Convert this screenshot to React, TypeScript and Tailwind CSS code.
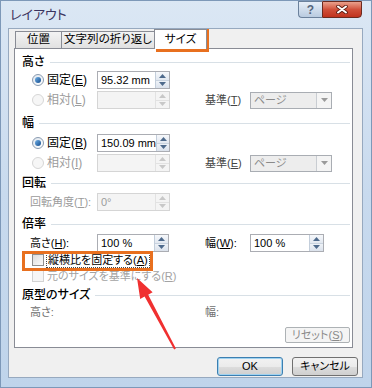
import React from "react";

const F = "font-['Liberation_Sans','Noto_Sans_CJK_JP',sans-serif] [font-feature-settings:'palt']";

function U({ children }: { children: React.ReactNode }) {
  return <span className="underline underline-offset-[1px]">{children}</span>;
}

function Spin({ disabled }: { disabled?: boolean }) {
  const c = disabled ? "#c8c8c8" : "#4e6a8c";
  return (
    <div className={`flex flex-col w-[14px] h-full border-l ${disabled ? "border-[#e2e2e2]" : "border-[#c3cedb]"}`}>
      <div className={`flex-1 flex items-center justify-center border-b ${disabled ? "bg-[#f4f4f4] border-[#e2e2e2]" : "bg-gradient-to-b from-[#f6f8fb] to-[#e2e8f0] border-[#c9d3df]"}`}>
        <svg width="7" height="4">
          <path d="M0 4 L3.5 0 L7 4Z" fill={c} />
        </svg>
      </div>
      <div className={`flex-1 flex items-center justify-center ${disabled ? "bg-[#f4f4f4]" : "bg-gradient-to-b from-[#eef2f7] to-[#dbe2ec]"}`}>
        <svg width="7" height="4">
          <path d="M0 0 L3.5 4 L7 0Z" fill={c} />
        </svg>
      </div>
    </div>
  );
}

function NumInput({ value, disabled, w }: { value?: string; disabled?: boolean; w: string }) {
  return (
    <div className={`flex h-[18px] ${w} border ${disabled ? "border-[#d5d5d5] bg-[#f4f4f4]" : "border-[#abadb3] bg-white"}`}>
      <div className={`flex-1 flex items-center pl-[3px] whitespace-nowrap ${disabled ? "text-[#9b9b9b]" : "text-black"}`}>
        {value}
      </div>
      <Spin disabled={disabled} />
    </div>
  );
}

function Select() {
  return (
    <div className="flex h-[17px] w-[82px] border border-[#a9adb3] bg-[#ededed]">
      <div className="flex-1 flex items-center pl-[3px] text-[#8a8a8a]">ページ</div>
      <div className="w-[15px] flex items-center justify-center border-l border-[#c9cdd2] bg-[#f4f4f4]">
        <svg width="7" height="4">
          <path d="M0 0 L3.5 4 L7 0Z" fill="#9a9a9a" />
        </svg>
      </div>
    </div>
  );
}

function Radio({ checked, disabled }: { checked?: boolean; disabled?: boolean }) {
  return (
    <span
      className={`flex items-center justify-center w-[12px] h-[12px] rounded-full border ${
        disabled ? "border-[#d6d6d6] bg-[#f6f6f6]" : "border-[#8a9bb0] bg-gradient-to-br from-[#dfe6ee] to-white"
      }`}
    >
      {checked && <span className="w-[6px] h-[6px] rounded-full bg-gradient-to-br from-[#6fb0e6] to-[#124c8e]" />}
    </span>
  );
}

function Check({ disabled }: { disabled?: boolean }) {
  return (
    <span
      className={`w-[12px] h-[12px] border ${
        disabled ? "border-[#d3d3d3] bg-[#f6f6f6]" : "border-[#8f8f8f] bg-gradient-to-br from-[#dcdcdc] to-[#fbfbfb]"
      }`}
    />
  );
}

function Heading({ children, mt }: { children: React.ReactNode; mt: string }) {
  return (
    <div className={`flex items-center h-[16px] pl-[7px] pr-[2px] gap-[5px] ${mt}`}>
      <span className="font-medium text-[12px]">{children}</span>
      <div className="flex-1 h-px bg-[#d8e0e6]" />
    </div>
  );
}

function RadioRow({
  checked,
  label,
  value,
  mt,
  right,
}: {
  checked?: boolean;
  label: React.ReactNode;
  value?: string;
  mt: string;
  right?: React.ReactNode;
}) {
  return (
    <div className={`flex items-center h-[18px] ${mt}`}>
      <div className={`w-[82px] flex items-center pl-[17px] gap-[3px] ${checked ? "text-black" : "text-[#9b9b9b]"}`}>
        <Radio checked={checked} disabled={!checked} />
        <span className="text-[12px]">{label}</span>
      </div>
      <NumInput value={value} disabled={!checked} w="w-[73px]" />
      {right}
    </div>
  );
}

function Basis({ label }: { label: React.ReactNode }) {
  return (
    <div className="flex items-center ml-[35px]">
      <span className="w-[45px] text-[#444] whitespace-nowrap">{label}</span>
      <Select />
    </div>
  );
}

function Panel() {
  return (
    <div className="ml-[5px] w-[339px] h-[300px] border border-[#898c95] bg-white flex flex-col">
      <Heading mt="mt-[5px]">高さ</Heading>
      <RadioRow checked label={<>固定(<U>E</U>)</>} value="95.32 mm" mt="mt-[1px]" />
      <RadioRow label={<>相対(<U>L</U>)</>} mt="mt-[2px]" right={<Basis label={<>基準(<U>T</U>)</>} />} />

      <Heading mt="mt-[6px]">幅</Heading>
      <RadioRow checked label={<>固定(<U>B</U>)</>} value="150.09 mm" mt="mt-[3px]" />
      <RadioRow label={<>相対(<U>I</U>)</>} mt="mt-[2px]" right={<Basis label={<>基準(<U>E</U>)</>} />} />

      <Heading mt="mt-[3px]">回転</Heading>
      <div className="flex items-center h-[18px] mt-[2px]">
        <span className="w-[82px] pl-[15px] text-[#9b9b9b] whitespace-nowrap">
          回転角度(<U>T</U>):
        </span>
        <NumInput value="0°" disabled w="w-[73px]" />
      </div>

      <Heading mt="mt-[5px]">倍率</Heading>
      <div className="flex items-center h-[18px] mt-[2px]">
        <span className="w-[82px] pl-[15px]">
          高さ(<U>H</U>):
        </span>
        <NumInput value="100 %" w="w-[72px]" />
        <span className="ml-[36px] w-[45px]">
          幅(<U>W</U>):
        </span>
        <NumInput value="100 %" w="w-[74px]" />
      </div>
      <div className="flex items-center h-[16px] pl-[17px] gap-[2px]">
        <Check />
        <span className="border border-dotted border-[#444] px-[1px] leading-[13px] whitespace-nowrap">
          縦横比を固定する(<U>A</U>)
        </span>
      </div>
      <div className="flex items-center h-[16px] pl-[17px] gap-[3px] text-[#a3a3a3] whitespace-nowrap">
        <Check disabled />
        <span>
          元のサイズを基準にする(<U>R</U>)
        </span>
      </div>

      <Heading mt="mt-[3px]">原型のサイズ</Heading>
      <div className="flex items-center h-[16px] mt-[1px] text-[#6f6f6f]">
        <span className="w-[190px] pl-[15px]">高さ:</span>
        <span>幅:</span>
      </div>
      <div className="flex justify-end mt-[7px] pr-[2px]">
        <div className="w-[65px] h-[16px] flex items-center justify-center rounded-[2px] border border-[#adb2b5] bg-[#f4f4f4] text-[#8a8a8a]">
          リセット(<U>S</U>)
        </div>
      </div>
    </div>
  );
}

function Tabs() {
  return (
    <div className="flex items-end h-[19px] pl-[6px] text-[11.5px]">
      <div className="w-[47px] h-[17px] flex items-center justify-center border border-b-0 border-[#898c95] bg-gradient-to-b from-[#f3f3f3] to-[#e1e1e1]">
        位置
      </div>
      <div className="-ml-px w-[94px] h-[17px] flex items-center justify-center border border-b-0 border-[#898c95] bg-gradient-to-b from-[#f3f3f3] to-[#e1e1e1] whitespace-nowrap">
        文字列の折り返し
      </div>
      <div className="relative z-10 -ml-px -mb-px w-[53px] h-[20px] flex items-center justify-center border border-b-0 border-[#898c95] bg-white">
        サイズ
      </div>
    </div>
  );
}

function Btn({ children, primary }: { children: React.ReactNode; primary?: boolean }) {
  return (
    <div
      className={`w-[66px] h-[19px] flex items-center justify-center rounded-[3px] border ${
        primary ? "border-[#3c7fb1] shadow-[inset_0_0_0_1px_#9fd2f0]" : "border-[#707070]"
      } bg-[linear-gradient(#f2f2f2_0%,#ebebeb_50%,#dddddd_51%,#cfcfcf_100%)]`}
    >
      {children}
    </div>
  );
}

function TitleBar() {
  return (
    <div className="h-[27px] flex items-start justify-between">
      <span className="pl-[9px] pt-[4px] text-[13px] text-[#3a335f]">レイアウト</span>
      <div className="flex mr-[9px]">
        <div className="w-[24px] h-[17px] flex items-center justify-center rounded-bl-[4px] border border-r-0 border-[#6b819c] bg-gradient-to-b from-[#e6eef8] to-[#b9cbe0] text-[12px] font-bold text-[#55657c]">
          ?
        </div>
        <div className="w-[40px] h-[17px] flex items-center justify-center rounded-br-[4px] border border-[#6b2a1f] bg-gradient-to-b from-[#e9a08c] via-[#d0503a] to-[#c0321d]">
          <svg width="12" height="9" viewBox="0 0 12 9">
            <path d="M2 1.5 L10 7.5 M10 1.5 L2 7.5" stroke="#5a1a10" strokeWidth="3.6" strokeLinecap="round" />
            <path d="M2 1.5 L10 7.5 M10 1.5 L2 7.5" stroke="#ffffff" strokeWidth="2" strokeLinecap="round" />
          </svg>
        </div>
      </div>
    </div>
  );
}

export default function App() {
  return (
    <div
      className={`relative w-[372px] h-[388px] overflow-hidden border border-[#7d98b8] bg-gradient-to-b from-[#dbe7f4] via-[#c8daee] to-[#bfd4eb] flex flex-col text-[11px] text-black ${F}`}
    >
      <TitleBar />
      <div className="ml-[7px] mr-[8px] h-[350px] border border-[#97a9bf] bg-[#f0f0f0] flex flex-col">
        <Tabs />
        <Panel />
        <div className="flex justify-end gap-[9px] mt-[9px] pr-[4px]">
          <Btn primary>OK</Btn>
          <Btn>キャンセル</Btn>
        </div>
      </div>

      {/* callouts */}
      <div className="absolute left-[155px] top-[28px] w-[53px] h-[23px] border-[3px] border-[#e8701f]" />
      <div className="absolute left-[21px] top-[250px] w-[131px] h-[20px] border-[3px] border-[#e8701f]" />
      <svg className="absolute left-0 top-0 pointer-events-none" width="372" height="388">
        <polygon
          points="136,277 151.6,291.3 147.2,293.7 174.9,347.5 173.1,348.5 143.6,295.5 139.2,297.9"
          fill="#f03030"
        />
      </svg>
    </div>
  );
}
